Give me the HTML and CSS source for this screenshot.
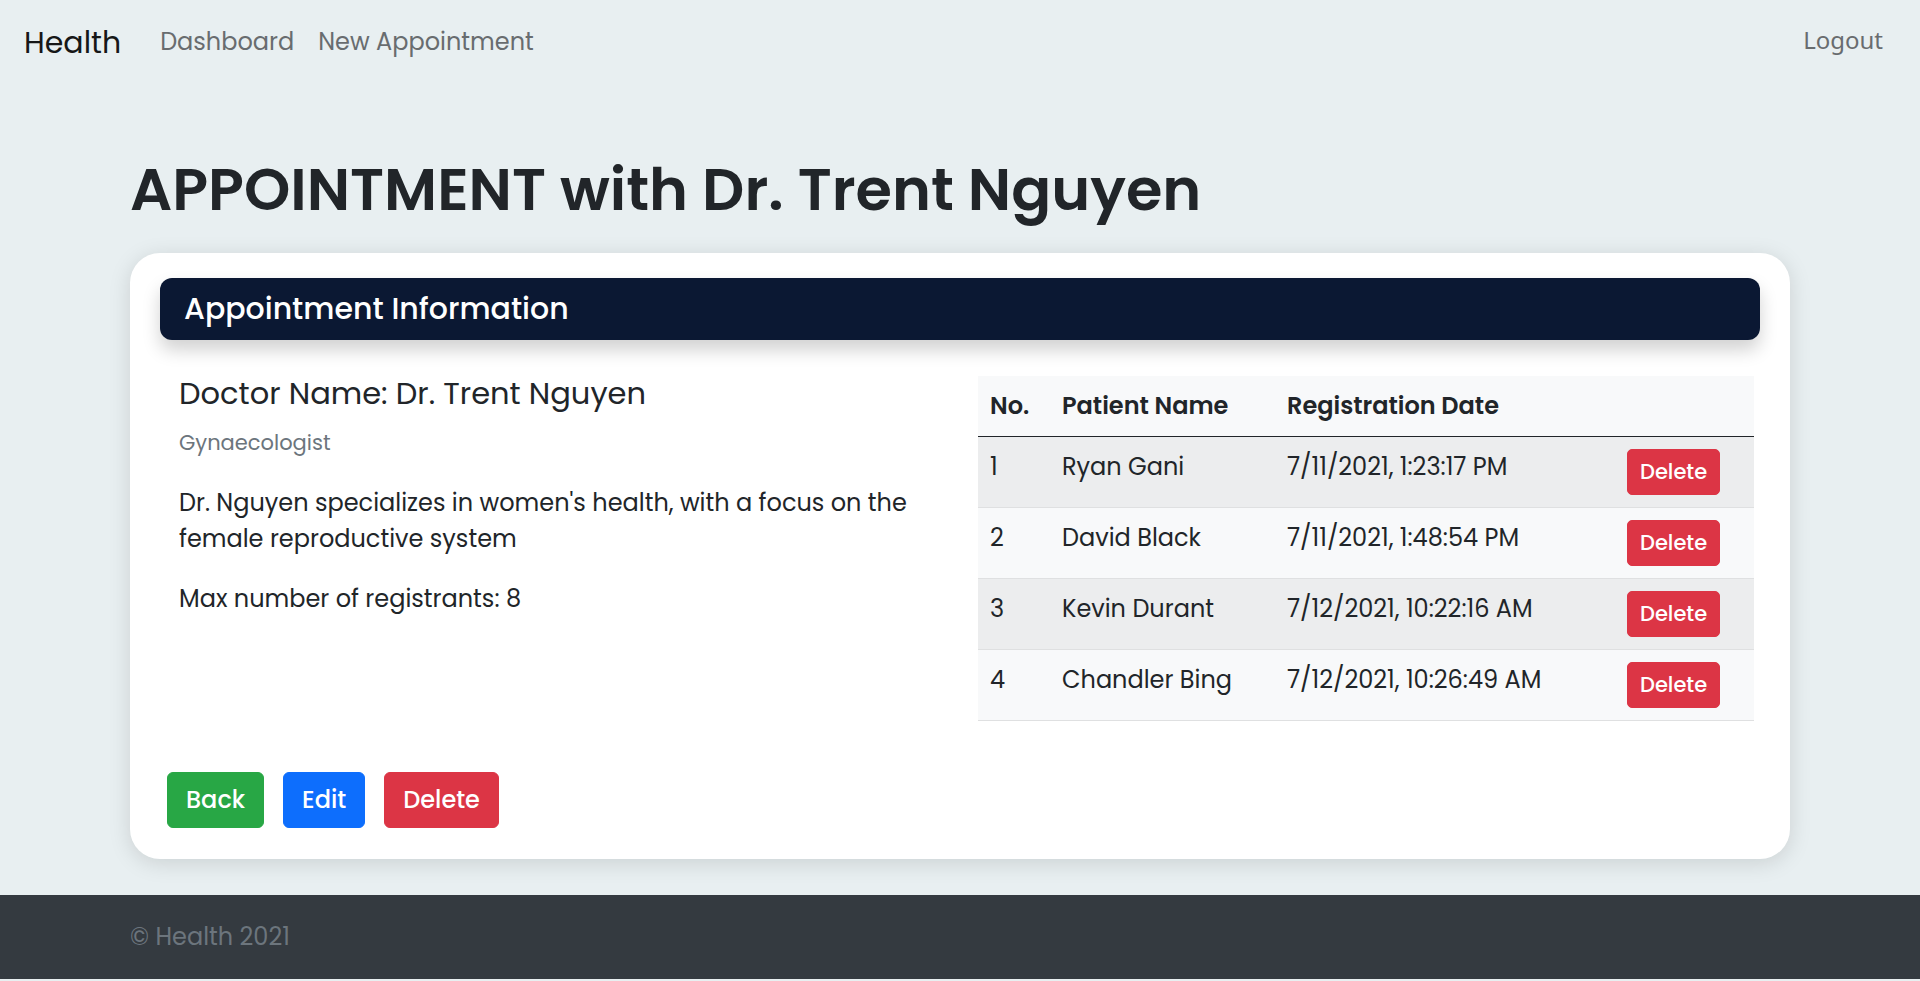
FILE: index.html
```html
<!DOCTYPE html>
<html lang="en">
<head>
<meta charset="utf-8">
<title>Health - Appointment</title>
<link rel="stylesheet" href="styles.css">
</head>
<body>
<nav class="navbar">
  <div class="nav-left">
    <a class="brand" href="#">Health</a>
    <a class="nav-link" href="#">Dashboard</a>
    <a class="nav-link" href="#">New Appointment</a>
  </div>
  <a class="nav-link logout" href="#">Logout</a>
</nav>

<main class="container">
  <h1 class="page-title">APPOINTMENT with Dr. Trent Nguyen</h1>
  <section class="card">
    <div class="card-header">Appointment Information</div>
    <div class="card-row">
      <div class="info">
        <h5 class="card-title">Doctor Name: Dr. Trent Nguyen</h5>
        <h6 class="card-subtitle">Gynaecologist</h6>
        <p class="card-text">Dr. Nguyen specializes in women's health, with a focus on the female reproductive system</p>
        <p class="card-text">Max number of registrants: 8</p>
      </div>
      <div class="table-wrap">
        <table class="reg-table">
          <thead>
            <tr>
              <th class="c-no">No.</th>
              <th class="c-name">Patient Name</th>
              <th class="c-date">Registration Date</th>
              <th class="c-act"></th>
            </tr>
          </thead>
          <tbody>
            <tr class="odd">
              <td>1</td><td>Ryan Gani</td><td>7/11/2021, 1:23:17 PM</td>
              <td><button class="btn btn-sm btn-danger">Delete</button></td>
            </tr>
            <tr>
              <td>2</td><td>David Black</td><td>7/11/2021, 1:48:54 PM</td>
              <td><button class="btn btn-sm btn-danger">Delete</button></td>
            </tr>
            <tr class="odd">
              <td>3</td><td>Kevin Durant</td><td>7/12/2021, 10:22:16 AM</td>
              <td><button class="btn btn-sm btn-danger">Delete</button></td>
            </tr>
            <tr>
              <td>4</td><td>Chandler Bing</td><td>7/12/2021, 10:26:49 AM</td>
              <td><button class="btn btn-sm btn-danger">Delete</button></td>
            </tr>
          </tbody>
        </table>
      </div>
    </div>
    <div class="actions">
      <button class="btn btn-success">Back</button>
      <button class="btn btn-primary">Edit</button>
      <button class="btn btn-danger">Delete</button>
    </div>
  </section>
</main>

<footer class="footer">
  <div class="container">&copy; Health 2021</div>
</footer>
</body>
</html>
```

FILE: styles.css
```css
* { box-sizing: border-box; }

html, body {
  margin: 0;
  padding: 0;
}

body {
  background: #e8eff1;
  color: #212529;
  font-family: "Poppins", "Open Sans", "DejaVu Sans", sans-serif;
  font-size: 24px;
  line-height: 36px;
}

a { text-decoration: none; }

/* Navbar */
.navbar {
  height: 84px;
  display: flex;
  align-items: center;
  justify-content: space-between;
  padding: 0 25px 0 24px;
}

.nav-left {
  display: flex;
  align-items: center;
}

.brand {
  font-size: 30px;
  line-height: 45px;
  color: #161718;
  margin-right: 27px;
}

.nav-link {
  color: #686c6f;
  padding: 12px;
  font-size: 24px;
  line-height: 36px;
}

.logout {
  font-family: "Noto Sans", "Inter", sans-serif;
  padding: 10px 12px 14px 12px;
}

/* Main */
.container {
  width: 1660px;
  margin: 0 auto;
}

.page-title {
  font-size: 59px;
  line-height: 72px;
  font-weight: 600;
  margin: 70px 0 27px 0;
  color: #212529;
}

.card {
  background: #fff;
  border-radius: 30px;
  padding: 25px 30px 31px 30px;
  box-shadow: 0 4px 22px rgba(0, 0, 0, 0.13);
}

.card-header {
  background: #0b1833;
  color: #fff;
  border-radius: 12px;
  padding: 13px 24px;
  font-size: 30px;
  line-height: 36px;
  font-weight: 500;
  box-shadow: 0 10px 18px rgba(0, 0, 0, 0.18);
}

.card-row {
  display: flex;
  margin-top: 36px;
}

.info {
  width: 818px;
  padding: 0 24px 0 19px;
}

.card-title {
  font-size: 30.5px;
  line-height: 36px;
  font-weight: 400;
  margin: 0 0 15px 0;
}

.card-subtitle {
  font-size: 21px;
  line-height: 32px;
  font-weight: 400;
  color: #6c757d;
  margin: 0 0 26px 0;
}

.card-text {
  margin: 0 0 24px 0;
}

/* Table */
.table-wrap {
  width: 776px;
}

.reg-table {
  width: 776px;
  border-collapse: collapse;
  table-layout: fixed;
}

.reg-table th,
.reg-table td {
  padding: 12px;
  text-align: left;
  vertical-align: top;
}

.reg-table thead tr {
  background: #f8f9fa;
  border-bottom: 1px solid #212529;
}

.reg-table th {
  font-weight: 600;
}

.reg-table tbody tr {
  background: #f8f9fa;
  border-bottom: 1px solid #dfe0e1;
}

.reg-table tbody tr.odd {
  background: #ecedee;
}

.c-no { width: 72px; }
.c-name { width: 225px; }
.c-date { width: 340px; }
.c-act { width: 139px; }

/* Buttons */
.btn {
  font-family: inherit;
  font-size: 24px;
  line-height: 36px;
  font-weight: 500;
  padding: 9px 18px;
  border: 1px solid transparent;
  border-radius: 6px;
  color: #fff;
  cursor: pointer;
}

.btn-sm {
  font-size: 21px;
  line-height: 32px;
  padding: 6px 12px;
  border-radius: 5px;
}

.btn-danger { background: #dc3545; border-color: #dc3545; }
.btn-success { background: #28a745; border-color: #28a745; }
.btn-primary { background: #0d6efd; border-color: #0d6efd; }

.actions {
  display: flex;
  gap: 19px;
  margin-top: 51px;
  padding-left: 7px;
}

/* Footer */
.footer {
  margin-top: 36px;
  background: #343a40;
  color: #6c757d;
  padding: 24px 0;
  font-size: 24px;
  line-height: 36px;
}
```
